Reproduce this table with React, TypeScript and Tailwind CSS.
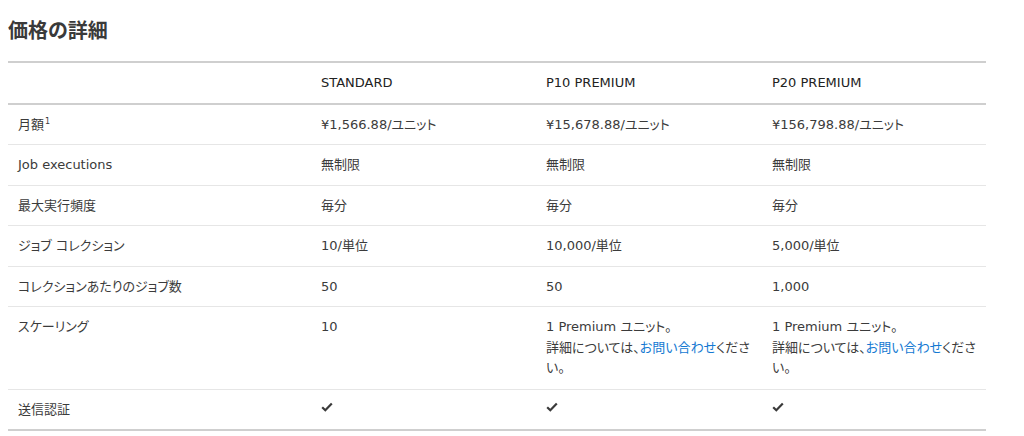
const rows: { label: React.ReactNode; cells: React.ReactNode[] }[] = [
  {
    label: (
      <>
        月額<sup className="relative -top-[5px] ml-[1px] text-[8px]">1</sup>
      </>
    ),
    cells: ["¥1,566.88/ユニット", "¥15,678.88/ユニット", "¥156,798.88/ユニット"],
  },
  { label: "Job executions", cells: ["無制限", "無制限", "無制限"] },
  { label: "最大実行頻度", cells: ["毎分", "毎分", "毎分"] },
  { label: "ジョブ コレクション", cells: ["10/単位", "10,000/単位", "5,000/単位"] },
  { label: "コレクションあたりのジョブ数", cells: ["50", "50", "1,000"] },
];

function Contact() {
  return (
    <>
      1 Premium ユニット。
      <br />
      詳細については、
      <a href="#" className="text-[#1479d2]">
        お問い合わせ
      </a>
      ください。
    </>
  );
}

function Check() {
  return (
    <svg width="12" height="10" viewBox="0 0 12 10" className="mt-[2px] block">
      <path d="M1.2 5.2 L4.3 8.2 L10.8 1.4" fill="none" stroke="#3a3a3a" strokeWidth="2.2" />
    </svg>
  );
}

export default function App() {
  const td = "px-[10px] py-[10px] align-top";
  return (
    <div className="min-h-[436px] bg-white pt-4 font-['DejaVu_Sans','Noto_Sans_CJK_JP',sans-serif] text-[13px] leading-[19.5px] text-[#3b3b3b] [font-feature-settings:'palt']">
      <h2 className="ml-2 font-['Noto_Sans_CJK_JP',sans-serif] text-[20px] font-bold leading-[28px] text-[#3a3a3a]">
        価格の詳細
      </h2>
      <table className="mt-[17px] ml-2 w-[978px] table-fixed border-collapse">
        <colgroup>
          <col className="w-[303px]" />
          <col className="w-[225px]" />
          <col className="w-[226px]" />
          <col className="w-[224px]" />
        </colgroup>
        <thead>
          <tr className="border-y-2 border-[#cfcfcf] text-[#222]">
            <th className="py-[10px]" />
            <th className="px-[10px] py-[10px] text-left font-normal">STANDARD</th>
            <th className="px-[10px] py-[10px] text-left font-normal">P10 PREMIUM</th>
            <th className="px-[10px] py-[10px] text-left font-normal">P20 PREMIUM</th>
          </tr>
        </thead>
        <tbody>
          {rows.map((r, i) => (
            <tr key={i} className="border-b border-[#e6e6e6]">
              <td className={td}>{r.label}</td>
              {r.cells.map((c, j) => (
                <td key={j} className={td}>
                  {c}
                </td>
              ))}
            </tr>
          ))}
          <tr className="border-b border-[#e6e6e6]">
            <td className={td}>スケーリング</td>
            <td className={td}>10</td>
            <td className={`${td} leading-[20.5px]`}>
              <Contact />
            </td>
            <td className={`${td} leading-[20.5px]`}>
              <Contact />
            </td>
          </tr>
          <tr className="border-b-2 border-[#cfcfcf]">
            <td className={td}>送信認証</td>
            <td className={td}>
              <Check />
            </td>
            <td className={td}>
              <Check />
            </td>
            <td className={td}>
              <Check />
            </td>
          </tr>
        </tbody>
      </table>
    </div>
  );
}
